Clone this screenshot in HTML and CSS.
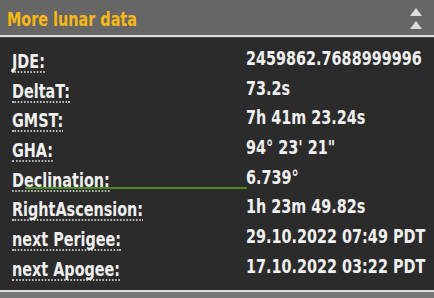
FILE: index.html
```html
<!DOCTYPE html>
<html lang="en">
<head>
    <meta charset="UTF-8">
    <meta name="viewport" content="width=device-width, initial-scale=1.0">
    <title>More lunar data</title>
    <link rel="stylesheet" href="styles.css">
</head>
<body>
    <div class="panel">
        <!-- Заголовок панели -->
        <div class="panel-head">
            <span class="panel-title">More lunar data</span>
            <svg class="collapse" width="12" height="22" viewBox="0 0 12 22">
                <polygon points="6,0 12,8 0,8" fill="#dcdcdc"/>
                <polygon points="6,13 12,21 0,21" fill="#dcdcdc"/>
            </svg>
        </div>

        <!-- Данные -->
        <div class="panel-body">
            <div class="row"><div class="cell"><abbr class="label" title="Julian Ephemeris Day">JDE:</abbr></div><span class="value">2459862.7688999996</span></div>
            <div class="row"><div class="cell"><abbr class="label" title="Delta T">DeltaT:</abbr></div><span class="value">73.2s</span></div>
            <div class="row"><div class="cell"><abbr class="label" title="Greenwich Mean Sidereal Time">GMST:</abbr></div><span class="value">7h 41m 23.24s</span></div>
            <div class="row"><div class="cell"><abbr class="label" title="Greenwich Hour Angle">GHA:</abbr></div><span class="value">94° 23' 21"</span></div>
            <div class="row marked"><div class="cell"><abbr class="label" title="Declination">Declination:</abbr></div><span class="value">6.739°</span></div>
            <div class="row"><div class="cell"><abbr class="label" title="Right Ascension">RightAscension:</abbr></div><span class="value">1h 23m 49.82s</span></div>
            <div class="row"><div class="cell"><abbr class="label" title="next Perigee">next Perigee:</abbr></div><span class="value">29.10.2022 07:49 PDT</span></div>
            <div class="row"><div class="cell"><abbr class="label" title="next Apogee">next Apogee:</abbr></div><span class="value">17.10.2022 03:22 PDT</span></div>
        </div>

        <div class="panel-foot"></div>
    </div>
</body>
</html>
```

FILE: styles.css
```css
body {
    margin: 0;
    background: #2b2b2b;
    font-family: 'DejaVu Sans Condensed', 'DejaVu Sans', sans-serif;
    font-stretch: condensed;
    color: #f0f0f0;
}
.panel {
    width: 434px;
    height: 298px;
    display: flex;
    flex-direction: column;
    overflow: hidden;
}
.panel-head {
    height: 37px;
    background: #666;
    border-bottom: 2px solid #dedede;
    box-shadow: 0 1px 0 #444;
    display: flex;
    align-items: center;
    justify-content: space-between;
    padding: 2px 12px 0 7px;
    box-sizing: border-box;
    flex-shrink: 0;
}
.panel-title {
    display: inline-block;
    font-size: 20px;
    font-weight: bold;
    color: #fbb814; /* жёлто-оранжевый заголовок */
    transform: scaleX(0.8);
    transform-origin: left center;
}
.collapse {
    display: block;
}
.panel-body {
    flex: 1;
    padding: 12px 0 0 12px;
}
.row {
    display: flex;
    align-items: flex-start;
    height: 29.7px;
    font-size: 20px;
    font-weight: bold;
    position: relative;
}
.cell {
    width: 234px;
    flex-shrink: 0;
    position: relative;
    z-index: 1;
}
.label {
    display: inline-block;
    text-decoration: none;
    line-height: 19px;
    border-bottom: 2px dotted #bbb;
    white-space: nowrap;
    transform: scaleX(0.8);
    transform-origin: left top;
}
.value {
    display: inline-block;
    line-height: 19px;
    white-space: nowrap;
    transform: scaleX(0.8);
    transform-origin: left top;
    position: relative;
    z-index: 1;
}
/* зелёная линия под склонением */
.marked::before {
    content: '';
    position: absolute;
    left: 13px;
    width: 222px;
    top: 19px;
    height: 2px;
    background: #4d8a1e;
}
.panel-foot {
    height: 6px;
    background: #777;
    border-top: 2px solid #dedede;
    flex-shrink: 0;
}
```
